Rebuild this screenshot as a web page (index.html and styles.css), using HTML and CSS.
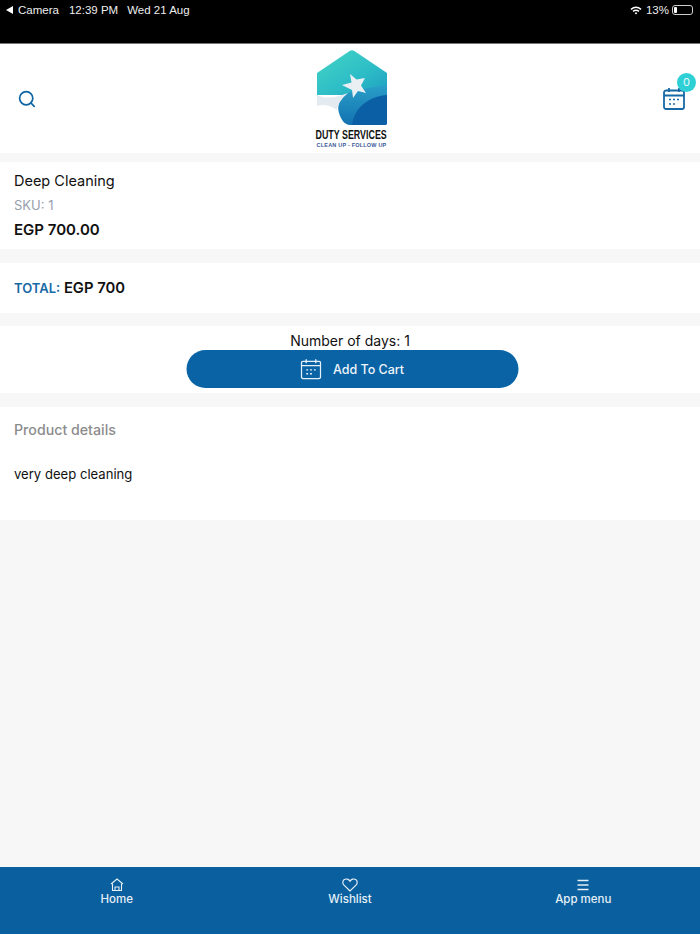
FILE: index.html
```html
<!DOCTYPE html>
<html lang="en">
<head>
    <meta charset="UTF-8">
    <meta name="viewport" content="width=device-width, initial-scale=1.0">
    <title>Duty Services</title>
    <link rel="stylesheet" href="styles.css">
</head>
<body>
    <!-- Status bar -->
    <div class="status-bar">
        <div class="status-left">
            <svg class="back-arrow" width="7" height="8" viewBox="0 0 7 8"><path d="M7 0V8L0 4Z" fill="#fff"/></svg>
            <span>Camera</span>
            <span class="status-time">12:39 PM</span>
            <span class="status-date">Wed 21 Aug</span>
        </div>
        <div class="status-right">
            <svg width="12" height="9" viewBox="0 0 12 9" fill="none" stroke="#fff" stroke-width="1.5">
                <path d="M1 3.4C4 .9 8 .9 11 3.4"/>
                <path d="M3 5.4C4.8 4 7.2 4 9 5.4"/>
                <path d="M6 8.6L4.6 7C5.4 6.4 6.6 6.4 7.4 7Z" fill="#fff" stroke="none"/>
            </svg>
            <span>13%</span>
            <span class="battery"><span class="battery-level"></span></span>
        </div>
    </div>

    <!-- Header -->
    <header class="header">
        <svg width="18" height="18" viewBox="0 0 18 18" fill="none" stroke="#0b64a3" stroke-width="1.7" stroke-linecap="round">
            <circle cx="8.2" cy="8.2" r="6.6"/>
            <path d="M13 13L16.2 16.4"/>
        </svg>
        <div class="logo">
            <svg width="70" height="75" viewBox="0 0 70 75">
                <defs>
                    <linearGradient id="houseGrad" x1="0" y1="0" x2="1" y2="1">
                        <stop offset="0" stop-color="#45d6c6"/>
                        <stop offset="0.6" stop-color="#2cbcc6"/>
                        <stop offset="1" stop-color="#1f9ec2"/>
                    </linearGradient>
                    <linearGradient id="waveGrad" x1="0" y1="0" x2="0" y2="1">
                        <stop offset="0" stop-color="#2a9fc8"/>
                        <stop offset="1" stop-color="#1272b0"/>
                    </linearGradient>
                </defs>
                <!-- house -->
                <path d="M0 23L33 .8Q35 -.3 37 .8L70 23V45H0Z" fill="url(#houseGrad)"/>
                <!-- blue drop -->
                <path d="M29 44C22 50 20 56 22 63C24 70 28 75 33 75H68Q70 75 70 73V35C56 38 42 38 29 44Z" fill="url(#waveGrad)"/>
                <path d="M35 75C37 58 52 46 70 45V73Q70 75 68 75Z" fill="#0b5fa5"/>
                <!-- swoosh -->
                <path d="M0 45C10 50 20 47 31 43C24 49 21 54 20 60C13 55 6 54 0 56Z" fill="#e4ebf0"/>
                <!-- star -->
                <path d="M33 24L39.500 29.500L48 28L44 35.500L49 43L41 41L36 48L35 40L25 35L34.500 32.500Z" fill="#e9eff3"/>
            </svg>
            <div class="logo-name">DUTY SERVICES</div>
            <div class="logo-tag">CLEAN UP - FOLLOW UP</div>
        </div>
        <div class="cart-icon">
            <svg width="22" height="23" viewBox="0 0 22 23" fill="none" stroke="#1769a6" stroke-width="1.8">
                <rect x="1" y="3.500" width="20" height="18.500" rx="2"/>
                <path d="M1 8.500H21M6 1V5M16 1V5"/>
                <path d="M6 12.500H8M10 12.500H12M14 12.500H16M6 17H8M10 17H12" stroke-width="1.600"/>
            </svg>
            <span class="cart-badge">0</span>
        </div>
    </header>

    <main class="content">
        <section class="panel product">
            <h2 class="product-name">Deep Cleaning</h2>
            <div class="sku">SKU: 1</div>
            <div class="price">EGP 700.00</div>
        </section>

        <section class="panel total">
            <span class="total-label">TOTAL:</span> EGP 700
        </section>

        <section class="panel days">
            <div class="days-label">Number of days: 1</div>
            <button class="btn-cart">
                <svg width="21" height="22" viewBox="0 0 22 22" fill="none" stroke="#e6f0f7" stroke-width="1.400">
                    <rect x="1" y="3" width="20" height="18" rx="1.500"/>
                    <path d="M1 7.500H21M6 .8V5M16 .8V5"/>
                    <path d="M6 12H8M10 12H12M14 12H16M6 16H8M10 16H12"/>
                </svg>
                Add To Cart
            </button>
        </section>

        <section class="panel details">
            <h3 class="details-title">Product details</h3>
            <p class="details-text">very deep cleaning</p>
        </section>
    </main>

    <!-- Bottom bar -->
    <footer class="footer">
        <a class="tab">
            <svg width="14" height="14" viewBox="0 0 14 14" fill="none" stroke="#e6f0f7" stroke-width="1.100">
                <path d="M1 6L7 1L13 6"/>
                <path d="M2.500 5.500V12.500H11.500V5.500"/>
                <path d="M5 12.500V9H9V12.500"/>
            </svg>
            Home
        </a>
        <a class="tab">
            <svg width="16" height="14" viewBox="0 0 16 14" fill="none" stroke="#e6f0f7" stroke-width="1.200">
                <path d="M8 13L2 7.200C.2 5.300 .6 2.700 2.300 1.600C4.200 .4 6.700 1 8 3.200C9.300 1 11.800 .4 13.700 1.600C15.400 2.700 15.800 5.300 14 7.200Z"/>
            </svg>
            Wishlist
        </a>
        <a class="tab">
            <svg width="14" height="14" viewBox="0 0 14 14" fill="none" stroke="#e6f0f7" stroke-width="1.300">
                <path d="M1.500 2.500H12.500M1.500 7H12.500M1.500 11.500H12.500"/>
            </svg>
            App menu
        </a>
    </footer>
</body>
</html>
```

FILE: styles.css
```css
body {
    font-family: Inter, "Liberation Sans", sans-serif;
    margin: 0;
    padding: 0;
    height: 934px;
    background: #f7f7f7;
    color: #111;
    display: flex;
    flex-direction: column;
    overflow: hidden;
}
.status-bar {
    background: #000;
    color: #eee;
    height: 44px;
    flex-shrink: 0;
    box-sizing: border-box;
    padding: 3px 7px 0 6px;
    font-family: "Liberation Sans", sans-serif;
    font-size: 11.500px;
    display: flex;
    justify-content: space-between;
    align-items: flex-start;
    border-bottom: 1px solid #777;
}
.status-left, .status-right {
    display: flex;
    align-items: center;
    height: 14px;
}
.back-arrow {
    margin-right: 5px;
}
.status-time {
    margin-left: 10px;
}
.status-date {
    margin-left: 9px;
}
.status-right span {
    margin-left: 4px;
}
.status-right .battery {
    width: 17px;
    height: 6px;
    border: 1px solid #ccc;
    border-radius: 3px;
    margin-left: 3px;
    padding: 1px;
    display: flex;
}
.status-right .battery-level {
    width: 3px;
    margin: 0;
    background: #fff;
    border-radius: 1px;
}
.header {
    background: #fff;
    height: 109px;
    flex-shrink: 0;
    display: flex;
    justify-content: space-between;
    align-items: center;
    padding: 0 15px 0 18px;
}
.logo {
    width: 70px;
    margin-left: 4px;
    display: flex;
    flex-direction: column;
    align-items: center;
    padding-top: 2px;
}
.logo svg {
    display: block;
}
.logo-name {
    font-family: "Liberation Sans", sans-serif;
    font-weight: bold;
    font-size: 12.500px;
    line-height: 14px;
    color: #111;
    white-space: nowrap;
    margin-top: 3px;
    transform: scaleX(0.71);
}
.logo-tag {
    font-family: "Liberation Sans", sans-serif;
    font-weight: bold;
    font-size: 5.500px;
    line-height: 7px;
    letter-spacing: 0.2px;
    color: #3a5a9a;
    white-space: nowrap;
}
.cart-icon {
    position: relative;
    height: 23px;
}
.cart-badge {
    position: absolute;
    top: -14px;
    right: -11px;
    width: 19px;
    height: 19px;
    border-radius: 50%;
    background: #2fcfd6;
    color: #e8fbfb;
    font-size: 11px;
    line-height: 19px;
    text-align: center;
}
.content {
    flex: 1;
    padding-top: 9px;
}
.panel {
    background: #fff;
    padding: 0 14px;
    box-sizing: border-box;
}
.product {
    height: 87px;
    padding-top: 9px;
    margin-bottom: 14px;
}
.product-name {
    margin: 0;
    font-size: 14.500px;
    font-weight: 400;
    line-height: 20px;
}
.sku {
    font-size: 13px;
    line-height: 20px;
    margin-top: 4px;
    color: #97a0ae;
}
.price {
    font-size: 15px;
    font-weight: 600;
    line-height: 22px;
    margin-top: 4px;
}
.total {
    height: 50px;
    line-height: 51px;
    font-size: 14.800px;
    font-weight: 600;
    margin-bottom: 13px;
}
.total-label {
    color: #1769a6;
    font-size: 13px;
}
.days {
    height: 67px;
    padding-top: 6px;
    margin-bottom: 14px;
    text-align: center;
}
.days-label {
    font-size: 14px;
    line-height: 18px;
}
.btn-cart {
    display: flex;
    align-items: center;
    justify-content: center;
    gap: 11px;
    width: 332px;
    height: 38px;
    margin: 0 auto;
    padding: 0;
    background: #0a63a5;
    color: #eef5fa;
    border: none;
    border-radius: 19px;
    font-family: inherit;
    font-size: 12.500px;
    font-weight: 500;
    cursor: pointer;
    transform: translateX(2.500px);
}
.details {
    height: 113px;
    padding-top: 13px;
}
.details-title {
    margin: 0;
    font-size: 14.200px;
    font-weight: 500;
    line-height: 20px;
    color: #8c8c8c;
}
.details-text {
    margin: 24px 0 0;
    font-size: 13.100px;
    line-height: 20px;
}
.footer {
    background: #0a5f9f;
    height: 67px;
    flex-shrink: 0;
    display: flex;
    padding: 11px 0 0;
    box-sizing: border-box;
}
.tab {
    flex: 1;
    display: flex;
    flex-direction: column;
    align-items: center;
    color: #e6f0f7;
    font-size: 11.500px;
    font-weight: 500;
    line-height: 15px;
}
```
